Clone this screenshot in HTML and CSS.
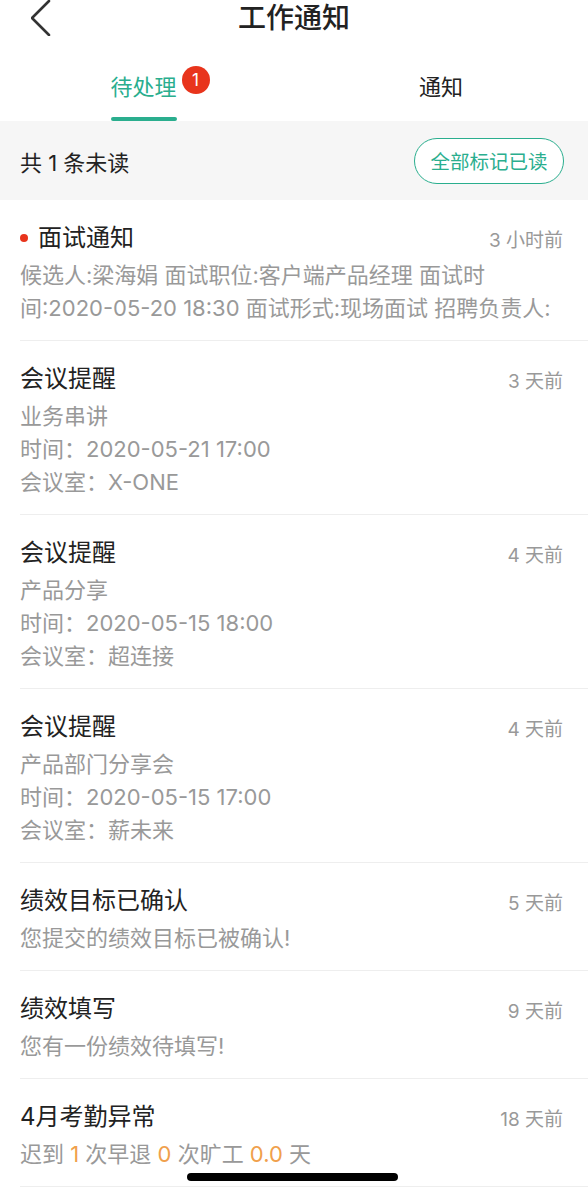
FILE: index.html
```html
<!DOCTYPE html>
<html lang="zh-CN">
<head>
    <meta charset="UTF-8">
    <meta name="viewport" content="width=device-width, initial-scale=1.0">
    <title>工作通知</title>
    <link rel="stylesheet" href="styles.css">
</head>
<body>
    <div class="page">
        <div class="nav-bar">
            <span class="back-btn">
                <svg width="24" height="36" viewBox="0 0 24 36">
                    <polyline points="18,1 1,18 18,35" fill="none" stroke="#333" stroke-width="2.6" stroke-linecap="round" stroke-linejoin="round"/>
                </svg>
            </span>
            <h1 class="nav-title">工作通知</h1>
        </div>

        <div class="tabs">
            <div class="tab active">
                <span class="tab-label">待处理<span class="badge">1</span></span>
                <span class="tab-line"></span>
            </div>
            <div class="tab">
                <span class="tab-label">通知</span>
                <span class="tab-line"></span>
            </div>
        </div>

        <div class="unread-bar">
            <span class="unread-count">共 1 条未读</span>
            <button class="mark-all">全部标记已读</button>
        </div>

        <ul class="notice-list">
            <li class="notice">
                <div class="notice-head">
                    <span class="notice-title"><i class="dot"></i>面试通知</span>
                    <span class="notice-time">3 小时前</span>
                </div>
                <p class="notice-line">候选人:梁海娟 面试职位:客户端产品经理 面试时</p>
                <p class="notice-line">间:2020-05-20 18:30 面试形式:现场面试 招聘负责人:</p>
            </li>
            <li class="notice">
                <div class="notice-head">
                    <span class="notice-title">会议提醒</span>
                    <span class="notice-time">3 天前</span>
                </div>
                <p class="notice-line">业务串讲</p>
                <p class="notice-line">时间：2020-05-21 17:00</p>
                <p class="notice-line">会议室：X-ONE</p>
            </li>
            <li class="notice">
                <div class="notice-head">
                    <span class="notice-title">会议提醒</span>
                    <span class="notice-time">4 天前</span>
                </div>
                <p class="notice-line">产品分享</p>
                <p class="notice-line">时间：2020-05-15 18:00</p>
                <p class="notice-line">会议室：超连接</p>
            </li>
            <li class="notice">
                <div class="notice-head">
                    <span class="notice-title">会议提醒</span>
                    <span class="notice-time">4 天前</span>
                </div>
                <p class="notice-line">产品部门分享会</p>
                <p class="notice-line">时间：2020-05-15 17:00</p>
                <p class="notice-line">会议室：薪未来</p>
            </li>
            <li class="notice">
                <div class="notice-head">
                    <span class="notice-title">绩效目标已确认</span>
                    <span class="notice-time">5 天前</span>
                </div>
                <p class="notice-line">您提交的绩效目标已被确认!</p>
            </li>
            <li class="notice">
                <div class="notice-head">
                    <span class="notice-title">绩效填写</span>
                    <span class="notice-time">9 天前</span>
                </div>
                <p class="notice-line">您有一份绩效待填写!</p>
            </li>
            <li class="notice">
                <div class="notice-head">
                    <span class="notice-title">4月考勤异常</span>
                    <span class="notice-time">18 天前</span>
                </div>
                <p class="notice-line">迟到 <em class="num">1</em> 次早退 <em class="num">0</em> 次旷工 <em class="num">0.0</em> 天</p>
            </li>
        </ul>

        <div class="home-indicator"></div>
    </div>
</body>
</html>
```

FILE: styles.css
```css
/* page */
body {
    margin: 0;
    font-family: Inter, "Noto Sans CJK SC", sans-serif;
    background-color: #ffffff;
    color: #222;
}

.page {
    width: 588px;
}

/* nav bar */
.nav-bar {
    position: relative;
    height: 36px;
    display: flex;
    justify-content: center;
    align-items: center;
}

.back-btn {
    position: absolute;
    left: 31px;
    top: 0;
    height: 36px;
}

.nav-title {
    margin: 0;
    font-size: 28px;
    font-weight: 500;
    line-height: 36px;
    color: #222;
}

/* tabs */
.tabs {
    display: flex;
    height: 85px;
}

.tab {
    flex: 1;
    display: flex;
    flex-direction: column;
    align-items: center;
    padding-top: 36px;
    box-sizing: border-box;
}

.tab-label {
    position: relative;
    font-size: 22px;
    line-height: 30px;
    color: #222;
}

.tab-line {
    width: 66px;
    height: 4px;
    margin-top: 15px;
    border-radius: 2px;
}

.tab.active .tab-label {
    color: #2aae8e;
    margin-left: -7px;
}

.tab.active .tab-line {
    background-color: #2aae8e;
    margin-left: -7px;
}

.badge {
    position: absolute;
    left: calc(100% + 5px);
    top: -6px;
    width: 28px;
    height: 28px;
    border-radius: 50%;
    background-color: #e8341c;
    color: #fff;
    font-size: 17px;
    line-height: 28px;
    text-align: center;
}

/* unread bar */
.unread-bar {
    height: 79px;
    background-color: #f6f6f6;
    display: flex;
    align-items: center;
    justify-content: space-between;
    padding: 0 24px 0 20px;
}

.unread-count {
    font-size: 22px;
    color: #222;
}

.mark-all {
    width: 150px;
    height: 46px;
    border: 1.5px solid #2aae8e;
    border-radius: 23px;
    background: #fff;
    color: #2aae8e;
    font-family: inherit;
    font-size: 19.5px;
    padding: 0;
}

/* notice list */
.notice-list {
    list-style: none;
    margin: 0;
    padding: 0;
}

.notice {
    margin-left: 20px;
    padding: 20px 25px 15px 0;
    border-bottom: 1px solid #eeeeee;
}

.notice-head {
    display: flex;
    justify-content: space-between;
    align-items: center;
    height: 36px;
    margin-bottom: 3px;
}

.notice-title {
    display: flex;
    align-items: center;
    font-size: 24px;
    line-height: 36px;
    color: #222;
}

.dot {
    width: 8px;
    height: 8px;
    border-radius: 50%;
    background-color: #e8341c;
    margin: 0 10px 0 0;
}

.notice-time {
    font-size: 19px;
    color: #999;
}

.notice-line {
    margin: 0;
    font-size: 22px;
    line-height: 33px;
    color: #999;
    white-space: nowrap;
    overflow: hidden;
}

.num {
    font-style: normal;
    color: #f0a04b;
}

/* home indicator */
.home-indicator {
    position: fixed;
    left: 187px;
    bottom: 12px;
    width: 211px;
    height: 8px;
    border-radius: 4px;
    background-color: #000;
}
```
